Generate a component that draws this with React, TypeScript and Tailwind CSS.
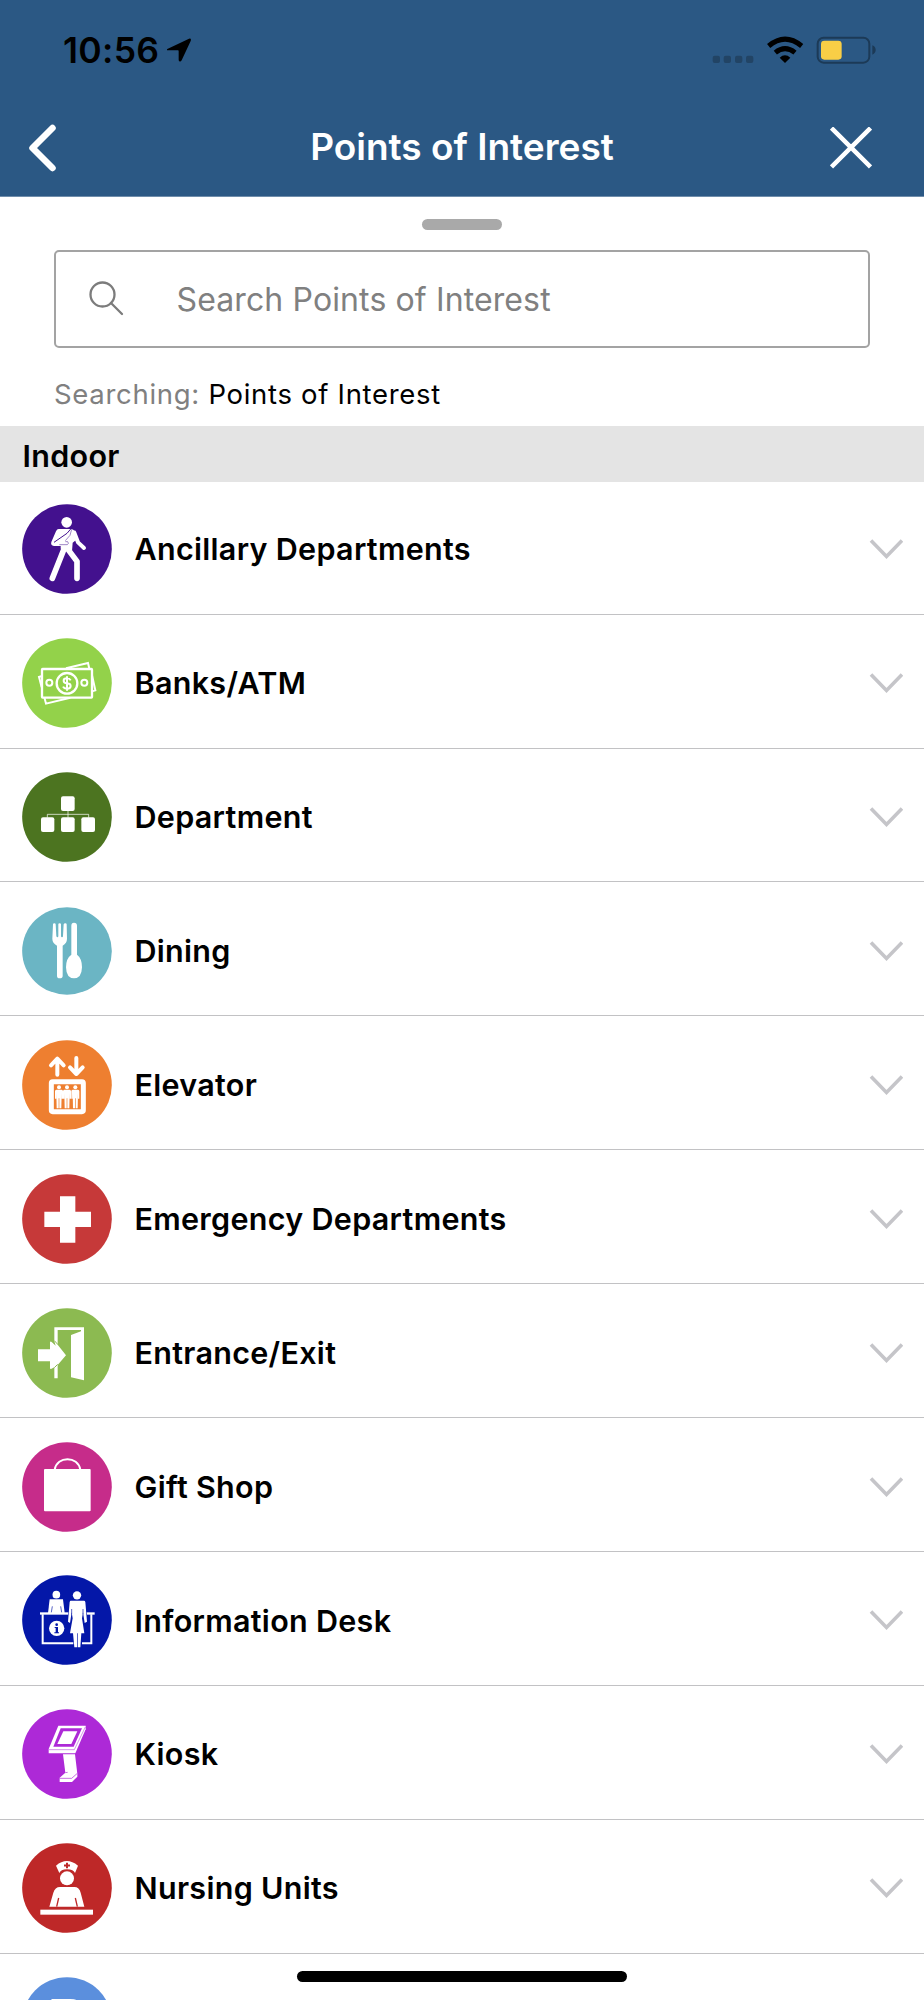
import React from 'react'

const AncillaryIcon = () => (
  <>
    <circle cx="134" cy="55" r="16" fill="#fff" />
    <path d="M110 75H146Q155 75 159 84L165 106L152 116L150 142L116 134V126H96Q85 124 88 114L102 82Q105 75 110 75Z" fill="#fff" />
    <path d="M157 86L168 115L186 132" fill="none" stroke="#fff" strokeWidth="12" strokeLinecap="round" strokeLinejoin="round" />
    <path d="M128 130L91 223M138 136L165 172V223" fill="none" stroke="#fff" strokeWidth="17" strokeLinecap="round" strokeLinejoin="round" />
    <path d="M147 74L135 88L96 115" fill="none" stroke="#43118e" strokeWidth="3" />
    <path d="M149 76L144 94L130 110M112 122H136Q142 118 137 113L130 113" fill="none" stroke="#43118e" strokeWidth="1.5" />
  </>
)

const BankIcon = () => (
  <g fill="none" stroke="#fff" strokeWidth="7">
    <rect x="60" y="93" width="150" height="86" rx="2" />
    <path d="M132 91L198 75L202 92M60 114L51 117L59 148M67 178L72 197L145 179M210 112L220 157L210 160" strokeWidth="6" />
    <circle cx="135" cy="136" r="31" />
    <circle cx="82" cy="134" r="9" strokeWidth="6" />
    <circle cx="187" cy="134" r="9" strokeWidth="6" />
    <path d="M146 127Q143 121 135 121Q125 121 125 128Q125 135 135 136Q146 137 146 144Q146 152 135 152Q126 152 123 146M135 115V158" strokeWidth="6" />
  </g>
)

const DepartmentIcon = () => (
  <>
    <g fill="#fff">
      <rect x="117" y="73" width="41" height="44" rx="6" />
      <rect x="57" y="136" width="40" height="44" rx="6" />
      <rect x="117" y="136" width="41" height="44" rx="6" />
      <rect x="178" y="136" width="41" height="44" rx="6" />
    </g>
    <path d="M138 116V137M76 137V127H200V137" fill="none" stroke="#fff" strokeWidth="2.5" opacity="0.85" />
  </>
)

const DiningIcon = () => (
  <g fill="#fff">
    <path d="M93 55Q93 52 97 52Q101 52 101 55L103 90Q104 94 106 94Q109 94 109 90V55Q109 52 113 52Q117 52 117 55V90Q117 94 120 94Q123 94 123 90L125 55Q126 52 130 52Q134 52 134 55L135 98Q135 111 122 119V209Q122 217 113 217Q105 217 105 209V119Q91 111 91 98Z" />
    <path d="M148 59Q148 50 156 50Q165 50 165 59V146Q180 157 180 184Q179 217 156 217Q133 217 132 184Q132 157 148 146Z" />
  </g>
)

const ElevatorIcon = () => (
  <>
    <g fill="none" stroke="#fff" strokeWidth="12" strokeLinecap="round" strokeLinejoin="round">
      <path d="M106 104V56M87 76L106 56L125 76" />
      <path d="M163 54V102M144 82L163 102L182 82" />
      <rect x="88" y="125" width="96" height="90" rx="4" strokeWidth="15" />
    </g>
    {[111, 135, 160].map((x) => (
      <g key={x} fill="#fff">
        <circle cx={x} cy="142" r="6" />
        <path d={`M${x - 8} 149h16q4 0 4 5v22h-4v-16l-1 45h-6v-30h-2v30h-6l-1 -45v16h-4v-22q0 -5 4 -5z`} />
      </g>
    ))}
  </>
)

const EmergencyIcon = () => (
  <path d="M114 67H160V113H207V159H160V206H114V159H67V113H114Z" fill="#fff" />
)

const EntranceIcon = () => (
  <>
    <path d="M97 100V58H186V217L147 208V81L177 70V66H107V110L132 142L107 171V211H97V178L87 183Q85 184 84 181V160H48V124H84V103Q85 99 89 102L101 113Z" fill="#fff" />
    <path d="M97 98L108 110M97 179L107 169" stroke="#8cba51" strokeWidth="3" />
  </>
)

const GiftIcon = () => (
  <>
    <rect x="66" y="81" width="140" height="127" rx="3" fill="#fff" />
    <path d="M98 83C105 41 168 41 175 83" fill="none" stroke="#fff" strokeWidth="6" />
  </>
)

const InformationIcon = () => (
  <>
    <g fill="#fff">
      <circle cx="103" cy="59" r="11.5" />
      <path d="M83 73H123L128 114H78Z" />
      <rect x="54" y="112" width="164" height="7" />
      <circle cx="104" cy="160" r="23" />
    </g>
    <path d="M62 118V205H208V118" fill="none" stroke="#fff" strokeWidth="6" />
    <path d="M88 112L91 94M119 112L116 94" stroke="#0417a8" strokeWidth="2" />
    <path d="M142 78H190L198 143L188 178H180V220H154V178H144L136 143Z" fill="#0417a8" />
    <g fill="#fff">
      <circle cx="165" cy="61" r="12.5" />
      <path d="M146 77H186Q189 77 190 81L195 140L188 144L183 112L180 130L187 175H178L175 217H167V175H165V217H157L153 175H144L152 130L149 112L144 144L138 140L143 81Q144 77 146 77Z" />
    </g>
    <path d="M149 102V118M183 102V118" stroke="#0417a8" strokeWidth="2" />
    <circle cx="104" cy="149" r="4" fill="#0417a8" />
    <path d="M98 156H108V172H111V175H97V172H101V159H98Z" fill="#0417a8" />
  </>
)

const KioskIcon = () => (
  <>
    <path d="M109 50H191V61L160 133H80V120Z" fill="#fff" />
    <path d="M81 122H157L190 54" fill="none" stroke="#ad29d7" strokeWidth="1.5" />
    <path d="M116 58H180L155 113H94Z" fill="#ad29d7" />
    <path d="M124 67H166L148 105H106Z" fill="#fff" />
    <path d="M123 136H159L166 194V203L150 219H113V206L130 191Z" fill="#fff" />
    <path d="M113 208H149L166 193M130 191L137 190" fill="none" stroke="#ad29d7" strokeWidth="2" />
  </>
)

const NursingIcon = () => (
  <>
    <g fill="#fff">
      <path d="M102 68Q134 40 168 68L159 90Q155 80 135 79Q116 80 112 90Z" />
      <circle cx="135" cy="106" r="21" />
      <path d="M82 191L94 149Q99 132 114 132H157Q172 132 176 149L187 191Z" />
      <rect x="55" y="200" width="158" height="15" />
    </g>
    <path d="M104 191L110 165M166 191L160 165" stroke="#be2828" strokeWidth="4" />
    <path d="M135 59V76M126 67.500H144" stroke="#be2828" strokeWidth="6" />
  </>
)

const ParkingIcon = () => (
  <text x="76" y="206" fontSize="195" fontWeight="700" fill="#fff">P</text>
)

const categories = [
  { name: 'Ancillary Departments', color: '#43118e', Icon: AncillaryIcon },
  { name: 'Banks/ATM', color: '#93d24a', Icon: BankIcon },
  { name: 'Department', color: '#4c7420', Icon: DepartmentIcon },
  { name: 'Dining', color: '#6bb5c4', Icon: DiningIcon, ry: 131 },
  { name: 'Elevator', color: '#ee7f30', Icon: ElevatorIcon },
  { name: 'Emergency Departments', color: '#c63939', Icon: EmergencyIcon },
  { name: 'Entrance/Exit', color: '#8cba51', Icon: EntranceIcon },
  { name: 'Gift Shop', color: '#c62c8a', Icon: GiftIcon },
  { name: 'Information Desk', color: '#0417a8', Icon: InformationIcon },
  { name: 'Kiosk', color: '#ad29d7', Icon: KioskIcon },
  { name: 'Nursing Units', color: '#be2828', Icon: NursingIcon },
  { name: '', color: '#5b8fdd', Icon: ParkingIcon },
]

const StatusBar = () => (
  <div className="flex h-[100px] items-center justify-between pl-[63px] pr-[48px]">
    <div className="flex items-center">
      <span className="w-[104px] whitespace-nowrap pt-px text-[35.500px] font-semibold leading-none tracking-[0.300px]">10:56</span>
      <svg className="h-6 w-6" viewBox="0 0 72 72">
        <path d="M2 32L67 1Q75 -1 72 8L45 66Q42 71 38 69Q36 68 36 64V38Q36 36 34 36H5Q-3 36 2 32Z" transform="translate(-1 1)" />
      </svg>
    </div>
    <svg className="h-7 w-[164px]" viewBox="0 0 492 84">
      <g fill="#224465">
        <rect x="2" y="59" width="22" height="22" rx="6" />
        <rect x="35" y="59" width="22" height="22" rx="6" />
        <rect x="69" y="59" width="22" height="22" rx="6" />
        <rect x="102" y="59" width="22" height="22" rx="6" />
      </g>
      <g fill="none" stroke="#000" strokeWidth="15">
        <path d="M170 30Q219 -11 269 30" />
        <path d="M190 50Q219 26 249 50" />
      </g>
      <path d="M203 65Q219 51 235 65L219 81Z" />
      <rect x="317" y="5" width="155" height="75" rx="18" fill="none" stroke="#1c3a57" strokeWidth="6" />
      <rect x="327" y="14" width="62" height="57" rx="10" fill="#f9ce46" />
      <path d="M481 28Q491 32 491 42Q491 52 481 56Z" fill="#1c3a57" />
    </svg>
  </div>
)

const App: React.FC = () => {
  return (
    <div className="h-[2000px] w-[924px] overflow-hidden bg-white font-['Inter','Liberation_Sans',sans-serif] text-black">
      <header className="h-[197px] border-b border-[#6f8dab] bg-[#2b5884]">
        <StatusBar />
        <div className="flex h-[95px] items-center pl-[28px] pr-[52px]">
          <svg className="h-12 w-[29px]" viewBox="0 0 29 48" fill="none" stroke="#fff" strokeWidth="6.500" strokeLinecap="round" strokeLinejoin="round">
            <path d="M24.500 4L4.500 24L24.500 44" />
          </svg>
          <h1 className="flex-1 whitespace-nowrap pb-[2px] pl-[37px] text-center text-[37px] font-semibold leading-none text-white">Points of Interest</h1>
          <svg className="h-[42px] w-[42px]" viewBox="0 0 42 42" stroke="#fff" strokeWidth="4.500">
            <path d="M1.500 1L40.500 40M40.500 1L1.500 40" />
          </svg>
        </div>
      </header>

      <div className="flex h-[229px] flex-col px-[54px] pt-[22px]">
        <div className="h-[11px] w-20 shrink-0 self-center rounded-full bg-[#a9a9a9]" />
        <div className="mt-5 flex h-[98px] shrink-0 items-center rounded-[5px] border-2 border-[#a3a3a3] pl-[33px]">
          <svg className="h-9 w-9" viewBox="0 0 36 36" fill="none" stroke="#7c7c7c" strokeWidth="2.300" strokeLinecap="round">
            <circle cx="13.500" cy="13.500" r="12" />
            <path d="M22 22L33 33" />
          </svg>
          <span className="ml-[51.500px] whitespace-nowrap pt-[2px] text-[32px] tracking-[0.120px] text-[#808080]">Search Points of Interest</span>
        </div>
        <p className="mt-[26px] whitespace-nowrap text-[27.500px] leading-[40px] tracking-[0.700px]">
          <span className="text-[#808080]">Searching:</span> Points of Interest
        </p>
      </div>

      <div className="relative z-10 flex h-[56px] items-center bg-[#e4e4e4] pl-[22.500px] pt-[3px] text-[30.500px] font-semibold tracking-[0.300px]">
        Indoor
      </div>

      <ul className="-mt-[1.250px]">
        {categories.map(({ name, color, Icon, ry }) => (
          <li key={color} className="flex h-[133.920px] items-center border-b border-[#c2c2c4] pl-[22px] pr-[21px] pt-[4px]">
            <svg className="h-[90px] w-[90px] shrink-0" viewBox="0 0 270 270">
              <ellipse cx="135" cy="135" rx="134.500" ry={ry || 134.5} fill={color} />
              <Icon />
            </svg>
            <span className="ml-[22.500px] flex-1 whitespace-nowrap text-[30.500px] font-semibold tracking-[0.300px]">{name}</span>
            <svg className="h-[22px] w-[34px]" viewBox="0 0 34 22" fill="none" stroke="#c5c5c9" strokeWidth="3.600">
              <path d="M2 2.500L17.500 18.500L33 2.500" />
            </svg>
          </li>
        ))}
      </ul>

      {/* home indicator */}
      <div className="absolute left-[297px] top-[1971px] z-20 h-[11px] w-[330px] rounded-full bg-black" />
    </div>
  )
}

export default App
